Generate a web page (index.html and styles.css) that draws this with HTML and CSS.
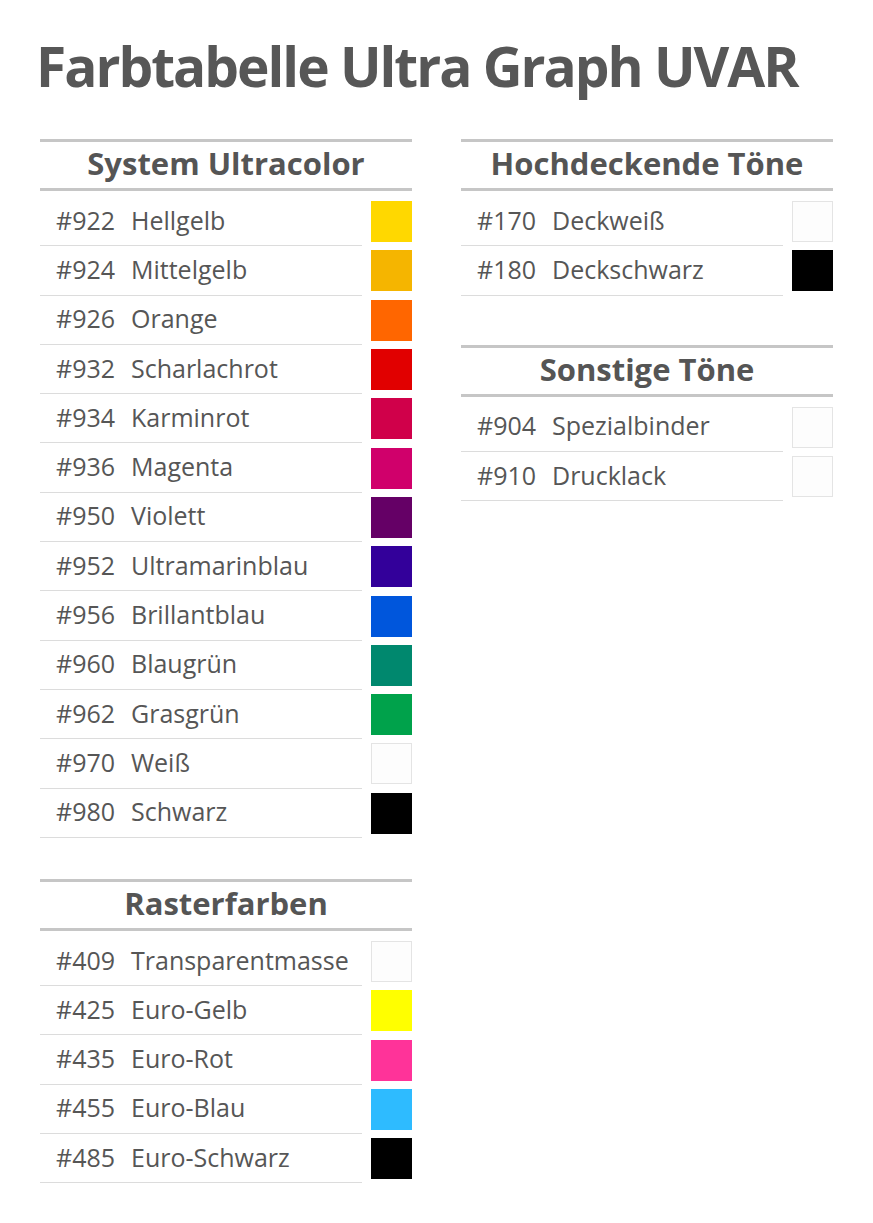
FILE: index.html
```html
<!DOCTYPE html>
<html lang="de">
<head>
<meta charset="utf-8">
<title>Farbtabelle Ultra Graph UVAR</title>
<link rel="stylesheet" href="styles.css">
</head>
<body>
<div class="page">
  <h1 class="title">Farbtabelle Ultra Graph UVAR</h1>
  <div class="columns">
    <div class="col">
      <section class="group">
        <h2 class="group-head">System Ultracolor</h2>
        <div class="rows">
          <div class="row"><div class="label"><span class="code">#922</span><span class="name">Hellgelb</span></div><div class="swatch" style="background:#ffd800"></div></div>
          <div class="row"><div class="label"><span class="code">#924</span><span class="name">Mittelgelb</span></div><div class="swatch" style="background:#f5b500"></div></div>
          <div class="row"><div class="label"><span class="code">#926</span><span class="name">Orange</span></div><div class="swatch" style="background:#ff6600"></div></div>
          <div class="row"><div class="label"><span class="code">#932</span><span class="name">Scharlachrot</span></div><div class="swatch" style="background:#e10000"></div></div>
          <div class="row"><div class="label"><span class="code">#934</span><span class="name">Karminrot</span></div><div class="swatch" style="background:#d0004a"></div></div>
          <div class="row"><div class="label"><span class="code">#936</span><span class="name">Magenta</span></div><div class="swatch" style="background:#d0006b"></div></div>
          <div class="row"><div class="label"><span class="code">#950</span><span class="name">Violett</span></div><div class="swatch" style="background:#650066"></div></div>
          <div class="row"><div class="label"><span class="code">#952</span><span class="name">Ultramarinblau</span></div><div class="swatch" style="background:#33009a"></div></div>
          <div class="row"><div class="label"><span class="code">#956</span><span class="name">Brillantblau</span></div><div class="swatch" style="background:#0056dc"></div></div>
          <div class="row"><div class="label"><span class="code">#960</span><span class="name">Blaugrün</span></div><div class="swatch" style="background:#00886e"></div></div>
          <div class="row"><div class="label"><span class="code">#962</span><span class="name">Grasgrün</span></div><div class="swatch" style="background:#00a24b"></div></div>
          <div class="row"><div class="label"><span class="code">#970</span><span class="name">Weiß</span></div><div class="swatch light"></div></div>
          <div class="row"><div class="label"><span class="code">#980</span><span class="name">Schwarz</span></div><div class="swatch" style="background:#000000"></div></div>
        </div>
      </section>
      <section class="group">
        <h2 class="group-head">Rasterfarben</h2>
        <div class="rows">
          <div class="row"><div class="label"><span class="code">#409</span><span class="name">Transparentmasse</span></div><div class="swatch light"></div></div>
          <div class="row"><div class="label"><span class="code">#425</span><span class="name">Euro-Gelb</span></div><div class="swatch" style="background:#ffff00"></div></div>
          <div class="row"><div class="label"><span class="code">#435</span><span class="name">Euro-Rot</span></div><div class="swatch" style="background:#ff3399"></div></div>
          <div class="row"><div class="label"><span class="code">#455</span><span class="name">Euro-Blau</span></div><div class="swatch" style="background:#2ebbff"></div></div>
          <div class="row"><div class="label"><span class="code">#485</span><span class="name">Euro-Schwarz</span></div><div class="swatch" style="background:#000000"></div></div>
        </div>
      </section>
    </div>
    <div class="col col-right">
      <section class="group">
        <h2 class="group-head">Hochdeckende Töne</h2>
        <div class="rows">
          <div class="row"><div class="label"><span class="code">#170</span><span class="name">Deckweiß</span></div><div class="swatch light"></div></div>
          <div class="row"><div class="label"><span class="code">#180</span><span class="name">Deckschwarz</span></div><div class="swatch" style="background:#000000"></div></div>
        </div>
      </section>
      <section class="group">
        <h2 class="group-head">Sonstige Töne</h2>
        <div class="rows">
          <div class="row"><div class="label"><span class="code">#904</span><span class="name">Spezialbinder</span></div><div class="swatch light"></div></div>
          <div class="row"><div class="label"><span class="code">#910</span><span class="name">Drucklack</span></div><div class="swatch light"></div></div>
        </div>
      </section>
    </div>
  </div>
</div>
</body>
</html>
```

FILE: styles.css
```css
html, body {
  margin: 0;
  padding: 0;
  background: #ffffff;
}

.page {
  font-family: "Open Sans", "Noto Sans", "DejaVu Sans", sans-serif;
  color: #555555;
  padding: 30px 40px 0 40px;
}

.title {
  margin: 0 0 0 -4px;
  font-size: 55px;
  line-height: 72px;
  font-weight: 700;
  letter-spacing: -2px;
  color: #575757;
  white-space: nowrap;
}

.columns {
  display: grid;
  grid-template-columns: 372px 372px;
  column-gap: 49px;
  margin-top: 37px;
}

.col {
  display: flex;
  flex-direction: column;
  gap: 41px;
}

.col-right {
  gap: 49px;
}

.group-head {
  margin: 0;
  height: 42px;
  padding-bottom: 4px;
  box-sizing: content-box;
  border-top: 3px solid #c6c6c6;
  border-bottom: 3px solid #c6c6c6;
  display: flex;
  align-items: center;
  justify-content: center;
  font-size: 31px;
  line-height: 40px;
  font-weight: 700;
  letter-spacing: 0;
  color: #555555;
}

.rows {
  display: flex;
  flex-direction: column;
  padding-top: 6px;
}

.row {
  display: flex;
  align-items: center;
  height: 49.3px;
}

.label {
  flex: 1;
  align-self: stretch;
  display: flex;
  align-items: center;
  padding-left: 16px;
  padding-bottom: 3px;
  border-bottom: 1px solid #dcdcdc;
  font-size: 25px;
  color: #565656;
}

.code {
  width: 75px;
  flex: none;
}

.name {
  white-space: nowrap;
}

.swatch {
  flex: none;
  width: 41px;
  height: 41px;
  margin-left: 9px;
  box-sizing: border-box;
}

.swatch.light {
  background: #fdfdfd;
  border: 1px solid #e4e4e4;
}
```
